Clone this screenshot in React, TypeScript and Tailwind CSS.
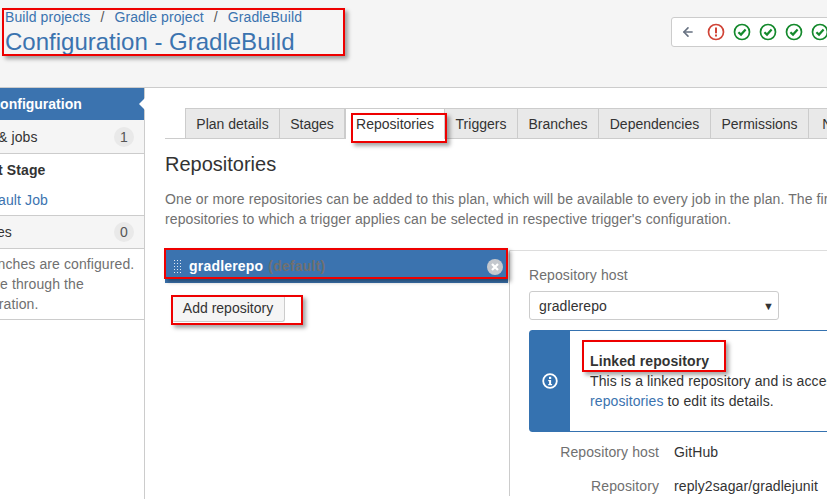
import { ArrowLeft } from 'lucide-react'

const tabs = [
  { label: 'Plan details', width: 'w-[95px]' },
  { label: 'Stages', width: 'w-[65px]' },
  { label: 'Repositories', width: 'w-[100px]', active: true },
  { label: 'Triggers', width: 'w-[73px]' },
  { label: 'Branches', width: 'w-[81px]' },
  { label: 'Dependencies', width: 'w-[112px]' },
  { label: 'Permissions', width: 'w-[98px]' },
  { label: 'Notifications', width: 'w-[104px]' },
]

function Check() {
  return (
    <svg width="20" height="20" viewBox="0 0 20 20" className="shrink-0">
      <circle cx="10" cy="10" r="7.5" fill="none" stroke="#14892c" strokeWidth="1.7" />
      <path d="M6.4 10.2 L9 12.6 L13.6 7.6" fill="none" stroke="#14892c" strokeWidth="2.2" />
    </svg>
  )
}

function ErrorIcon() {
  return (
    <svg width="20" height="20" viewBox="0 0 20 20" className="shrink-0">
      <circle cx="10" cy="10" r="7.5" fill="none" stroke="#d04437" strokeWidth="1.7" />
      <rect x="9" y="5.5" width="2" height="5.8" fill="#d04437" />
      <rect x="9" y="12.5" width="2" height="2" fill="#d04437" />
    </svg>
  )
}

function Badge({ n }: { n: number }) {
  return (
    <span className="flex h-5 w-5 items-center justify-center rounded-full bg-[#e9e9e9] text-[14px] text-[#555]">
      {n}
    </span>
  )
}

// red annotation drawn over the screenshot
function Mark({ className }: { className: string }) {
  return (
    <div
      className={`pointer-events-none absolute border-[2px] border-[#ee0000] shadow-[3px_3px_4px_rgba(0,0,0,0.35)] ${className}`}
    />
  )
}

export default function App() {
  return (
    <div className="relative h-[499px] w-[827px] overflow-hidden bg-white font-['Liberation_Sans',Arial,sans-serif] text-[14px] tracking-[0.1px] text-[#333]">
      <header className="flex h-[88px] items-start justify-between overflow-hidden border-b border-[#ccc] bg-[#f5f5f5] pl-[5px]">
        <div className="pt-[8px]">
          <div className="flex h-[18px] items-center gap-[10px] leading-[18px] text-[#3b73af]">
            <span>Build projects</span>
            <span className="text-[#555]">/</span>
            <span>Gradle project</span>
            <span className="text-[#555]">/</span>
            <span>GradleBuild</span>
          </div>
          <h1 className="mt-[1px] text-[24px] leading-[30px] tracking-normal text-[#3b73af]">
            Configuration - GradleBuild
          </h1>
        </div>
        <div className="mt-[17px] -mr-[60px] flex h-[30px] w-[216px] items-center gap-[6px] rounded-[3px] border border-[#ccc] bg-white pl-[9px]">
          <ArrowLeft size={14} strokeWidth={2.75} className="mr-[5px] text-[#667080]" />
          <ErrorIcon />
          <Check />
          <Check />
          <Check />
          <Check />
        </div>
      </header>

      <div className="flex h-[411px]">
        <aside className="relative h-full w-[145px] shrink-0 border-r border-[#ccc]">
          <div className="h-full overflow-hidden">
            <div className="flex h-[32px] items-center bg-[#3b73af] font-bold tracking-normal text-white">
              <span className="-ml-[10px]">Configuration</span>
            </div>
            <div className="flex h-[34px] items-center justify-between border-b border-[#ccc] bg-[#f5f5f5] pr-[10px] pt-[1px]">
              <span className="-ml-[2px]">&amp; jobs</span>
              <Badge n={1} />
            </div>
            <div className="flex h-[31px] items-center pt-[1px] font-bold">
              <span className="-ml-[28px]">First Stage</span>
            </div>
            <div className="flex h-[31px] items-center border-b border-[#ccc] pt-[1px] text-[#3b73af]">
              <span className="-ml-[24px]">Default Job</span>
            </div>
            <div className="flex h-[33px] items-center justify-between border-b border-[#ccc] bg-[#f5f5f5] pr-[10px]">
              <span className="-ml-[48px]">Branches</span>
              <Badge n={0} />
            </div>
            <div className="whitespace-nowrap border-b border-[#ccc] py-[5px] leading-[20px] text-[#707070]">
              <p className="-ml-[23px]">branches are configured.</p>
              <p className="-ml-[56px]">them here through the</p>
              <p className="-ml-[47px]">configuration.</p>
            </div>
          </div>
          <span className="absolute -right-px top-[10px] h-0 w-0 border-y-[6px] border-r-[6px] border-y-transparent border-r-white" />
        </aside>

        <main className="min-w-0 flex-1 overflow-hidden pl-[20px] pt-[20px]">
          <nav className="flex h-[31px] border-b border-[#ccc] pl-[20px] tracking-normal">
            {tabs.map((t) => (
              <div
                key={t.label}
                className={
                  t.active
                    ? `-mb-px flex h-[31px] shrink-0 items-center justify-center border-x border-t border-[#ccc] bg-white pt-[1px] ${t.width}`
                    : `flex h-[30px] shrink-0 items-center justify-center border-r border-t border-[#ccc] bg-[#e9e9e9] pt-[1px] first:border-l ${t.width}`
                }
              >
                {t.label}
              </div>
            ))}
          </nav>

          <h2 className="mt-[12px] text-[20px] leading-[26px] tracking-normal">Repositories</h2>
          <p className="mt-[12px] w-[700px] whitespace-nowrap leading-[20px] text-[#707070]">
            One or more repositories can be added to this plan, which will be available to every job in the plan. The first
            <br />
            repositories to which a trigger applies can be selected in respective trigger's configuration.
          </p>

          <div className="mt-[21px] flex">
            <div className="w-[344px] shrink-0">
              <div className="flex h-[33px] w-[343px] items-center bg-[#3b73af] pl-[8px] pr-[5px]">
                <span className="h-[15px] w-[9px] bg-[radial-gradient(#dfe8f2_1px,transparent_1px)] bg-[length:3px_3px]" />
                <span className="ml-[7px] font-bold tracking-[0.2px] text-white">gradlerepo</span>
                <span className="ml-[5px] font-bold tracking-[0.2px] text-[#707070]">(default)</span>
                <span className="ml-auto flex h-[16px] w-[16px] items-center justify-center rounded-full bg-[#c4c8ce]">
                  <svg width="8" height="8" viewBox="0 0 8 8">
                    <path d="M1 1 L7 7 M7 1 L1 7" stroke="#fff" strokeWidth="2.2" />
                  </svg>
                </span>
              </div>
              <button className="ml-[7px] mt-[12px] h-[27px] w-[113px] rounded-[3px] border-b border-r border-[#ccc] bg-[#f5f5f5] tracking-normal text-[#333]">
                Add repository
              </button>
            </div>

            <div className="flex-1 border-t border-[#ddd]">
              <div className="min-h-[230px] w-[400px] border-l border-[#ccc] pl-[19px] pt-[15px]">
                <label className="block leading-[18px] text-[#707070]">Repository host</label>
                <div className="mt-[7px] flex h-[29px] w-[250px] items-center justify-between rounded-[3px] border border-[#ccc] bg-white pl-[9px] pr-[4px] pt-[1px]">
                  <span>gradlerepo</span>
                  <span className="text-[11px] text-[#333]">▼</span>
                </div>
                <div className="mt-[10px] flex h-[102px] w-[400px] rounded-l-[3px] border border-[#3572b0]">
                  <div className="flex w-[40px] shrink-0 items-center justify-center bg-[#3572b0]">
                    <svg width="18" height="18" viewBox="0 0 18 18">
                      <circle cx="9" cy="9" r="6.8" fill="none" stroke="#fff" strokeWidth="1.8" />
                      <rect x="8" y="4.8" width="2.2" height="2.2" fill="#fff" />
                      <path d="M7.2 8h2.9v4h1v1.2H7.2V12h.9V9.2h-.9z" fill="#fff" />
                    </svg>
                  </div>
                  <div className="whitespace-nowrap pl-[20px] pt-[20px] leading-[20px]">
                    <div className="font-bold">Linked repository</div>
                    <div>This is a linked repository and is accessible</div>
                    <div>
                      <span className="text-[#3b73af]">repositories</span> to edit its details.
                    </div>
                  </div>
                </div>
                <dl className="mt-[10px] grid grid-cols-[130px_auto] gap-x-[15px] gap-y-[14px] leading-[20px]">
                  <dt className="text-right text-[#707070]">Repository host</dt>
                  <dd>GitHub</dd>
                  <dt className="text-right text-[#707070]">Repository</dt>
                  <dd>reply2sagar/gradlejunit</dd>
                </dl>
              </div>
            </div>
          </div>
        </main>
      </div>

      <Mark className="left-[2px] top-[8px] h-[48px] w-[343px]" />
      <Mark className="left-[351px] top-[113px] h-[30px] w-[96px]" />
      <Mark className="left-[164px] top-[248px] h-[31px] w-[344px]" />
      <Mark className="left-[171px] top-[295px] h-[30px] w-[132px]" />
      <Mark className="left-[582px] top-[340px] h-[32px] w-[144px]" />
    </div>
  )
}
